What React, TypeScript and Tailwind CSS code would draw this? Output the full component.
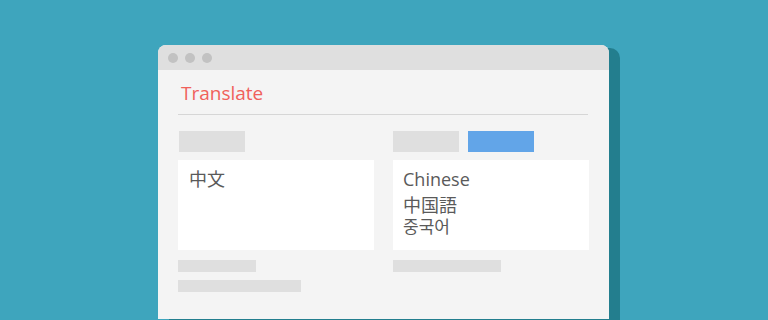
const font = { fontFamily: '"Open Sans", "Noto Sans CJK JP", "Noto Sans CJK KR", sans-serif' };

const Bar = ({ className }: { className: string }) => <div className={`bg-[#dfdfdf] ${className}`} />;

const App = () => {
  return (
    <div className="w-[768px] h-[320px] overflow-hidden bg-[#3ea5bd]" style={font}>
      <div className="relative ml-[158px] mt-[45px] w-[451px] h-[274px]">
        {/* drop shadow block behind the window */}
        <div className="absolute left-[11px] top-[3px] w-[451px] h-[290px] rounded-t-[10px] bg-[#237e8e]" />
        <div className="relative flex flex-col h-full rounded-t-[8px] overflow-hidden bg-[#f4f4f4]">
          <div className="flex items-center gap-[7px] h-[25px] px-[10px] bg-[#dfdfdf]">
            <span className="w-[10px] h-[10px] rounded-full bg-[#c2c2c2]" />
            <span className="w-[10px] h-[10px] rounded-full bg-[#c2c2c2]" />
            <span className="w-[10px] h-[10px] rounded-full bg-[#c2c2c2]" />
          </div>
          <div className="px-[20px]">
            <div className="mt-[10px] h-[34px] pl-[3px] text-[19px] leading-[26px] text-[#f0615b]">Translate</div>
            <div className="mr-[1px] h-px bg-[#d6d6d6]" />
            <div className="mt-[16px] grid grid-cols-2 gap-x-[19px]">
              <div className="flex flex-col">
                <div className="flex h-[21px] pl-px">
                  <Bar className="w-[66px]" />
                </div>
                <div className="mt-[8px] h-[90px] bg-white px-[11px] pt-[8px] text-[18px] leading-[22px] text-[#5a5a5a]">
                  中文
                </div>
                <Bar className="mt-[10px] w-[78px] h-[12px]" />
                <Bar className="mt-[8px] w-[123px] h-[12px]" />
              </div>
              <div className="flex flex-col">
                <div className="flex gap-[9px] h-[21px]">
                  <Bar className="w-[66px]" />
                  <div className="w-[66px] bg-[#62a5e8]" />
                </div>
                <div className="mt-[8px] h-[90px] bg-white px-[10px] pt-[8px] text-[18px] leading-[22px] text-[#5a5a5a]">
                  <div>Chinese</div>
                  <div className="mt-[4px]">中国語</div>
                  <div className="mt-[1px] text-[17px] leading-[20px]">중국어</div>
                </div>
                <Bar className="mt-[10px] w-[108px] h-[12px]" />
              </div>
            </div>
          </div>
        </div>
      </div>
    </div>
  );
};

export default App;
